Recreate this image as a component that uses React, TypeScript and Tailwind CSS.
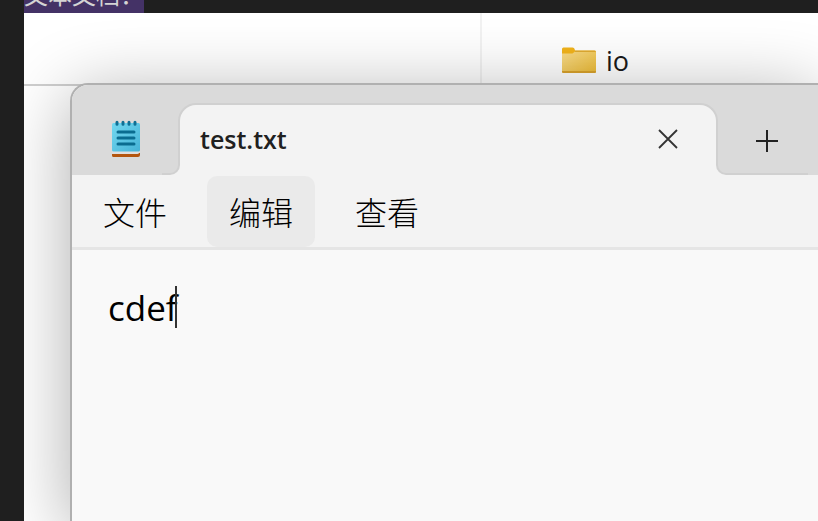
import React, { useState } from 'react';

const MENU_ITEMS = [
  { id: 'file', label: '文件', active: false },
  { id: 'edit', label: '编辑', active: true },
  { id: 'view', label: '查看', active: false },
];

const FolderIcon: React.FC = () => (
  <svg width="34" height="28" viewBox="0 0 34 28" aria-hidden="true">
    <defs>
      <linearGradient id="folder-front" x1="0" y1="0" x2="1" y2="1">
        <stop offset="0" stopColor="#f9dc8c" />
        <stop offset="1" stopColor="#ecbb35" />
      </linearGradient>
    </defs>
    <path d="M0 2Q0 .5 1.5 .5H10.5Q12.5 .5 13 3.5H32.5Q34 3.5 34 5V12H0Z" fill="#f2b31a" />
    <path d="M0 6.5H10.5L13 4.5H32.5Q34 4.5 34 6V24.5Q34 26 32.5 26H1.5Q0 26 0 24.5Z" fill="url(#folder-front)" />
    <path d="M0 24H34V24.5Q34 26 32.5 26H1.5Q0 26 0 24.5Z" fill="#d9a32c" />
    <path d="M13 4.3H33.5" stroke="#dda72f" strokeWidth="1.2" />
  </svg>
);

const NotepadIcon: React.FC = () => (
  <svg width="28" height="38" viewBox="0 0 28 38" aria-hidden="true">
    <defs>
      <linearGradient id="note-page" x1="0" y1="0" x2="1" y2="1">
        <stop offset="0" stopColor="#73d8f0" />
        <stop offset="1" stopColor="#45b2d6" />
      </linearGradient>
    </defs>
    <path d="M0 34H25L28 32.5V35Q28 37 26 37H1.5Q0 37 0 35.5Z" fill="#b4560f" />
    <path d="M0 31H28V32.5L26 33.8H0Z" fill="#e0e0e0" />
    <rect x="0" y="3" width="28" height="28.5" rx="1.5" fill="url(#note-page)" />
    <path d="M5 2.2V4.2M11 2.2V4.2M17 2.2V4.2M23 2.2V4.2" stroke="#0f6f94" strokeWidth="3" strokeLinecap="round" />
    <path d="M6 12H22M6 18H22M6 24H22" stroke="#0a6c90" strokeWidth="3" strokeLinecap="round" />
  </svg>
);

const TitleBar: React.FC = () => (
  <div className="flex items-end h-[90px] shrink-0 bg-[#dadada]">
    <div className="w-[106px] shrink-0 pl-10 pb-[17px]">
      <NotepadIcon />
    </div>

    <div className="relative flex items-center justify-between w-[540px] h-[72px] shrink-0 pb-0.5 pl-5 pr-[38px] rounded-t-[18px] border-2 border-b-0 border-[#d0d0d0] bg-[#f3f3f3]">
      <span className="text-[25px] leading-8 font-semibold text-[#202020]">test.txt</span>
      <button type="button" aria-label="关闭" className="text-[#333]">
        <svg width="20" height="20" viewBox="0 0 20 20" aria-hidden="true">
          <path d="M1 1L19 19M19 1L1 19" stroke="currentColor" strokeWidth="1.8" />
        </svg>
      </button>

      {/* Feet of the tab, curving out into the bar */}
      <div className="absolute right-full bottom-0 w-[18px] h-3 bg-[#f3f3f3]">
        <div className="h-full rounded-br-[10px] border-r-2 border-b-2 border-[#d0d0d0] bg-[#dadada]"></div>
      </div>
      <div className="absolute left-full bottom-0 w-[92px] h-3 bg-[#f3f3f3]">
        <div className="h-full rounded-bl-[10px] border-l-2 border-b-2 border-[#d0d0d0] bg-[#dadada]"></div>
      </div>
    </div>

    <button type="button" aria-label="新建标签页" className="relative shrink-0 ml-[37px] pb-[22px] text-[#222]">
      <svg width="24" height="24" viewBox="0 0 24 24" aria-hidden="true">
        <path d="M12 1V23M1 12H23" stroke="currentColor" strokeWidth="2" />
      </svg>
    </button>
  </div>
);

const MenuBar: React.FC = () => (
  <nav className="flex gap-[18px] shrink-0 pl-[9px] pt-px border-b-[3px] border-[#e5e5e5] bg-[#f3f3f3]">
    {MENU_ITEMS.map((item) => (
      <button
        key={item.id}
        type="button"
        className={`px-[22px] pt-0.5 h-[71px] rounded-[10px] text-[32px] leading-10 font-light text-black ${item.active ? 'bg-[#eaeaea]' : ''}`}
      >
        {item.label}
      </button>
    ))}
  </nav>
);

const Notepad: React.FC = () => {
  const [text, setText] = useState('cdef');

  return (
    <section className="relative flex flex-col flex-1 ml-[46px] -mt-[3px] overflow-hidden rounded-tl-[18px] border-l-2 border-t-2 border-[#b0b0b0] bg-[#f9f9f9] shadow-[0_12px_72px_rgba(0,0,0,0.33)]">
      <TitleBar />
      <MenuBar />
      <div className="relative flex flex-1 px-9 pt-9">
        <textarea
          aria-label="文本编辑器"
          value={text}
          onChange={(e) => setText(e.target.value)}
          className="flex-1 resize-none outline-none bg-transparent text-[35px] leading-[44px] text-black"
        />
        {/* Text cursor */}
        <div className="absolute left-[103px] top-9 w-0.5 h-[42px] bg-[#333]"></div>
      </div>
    </section>
  );
};

export default function App() {
  return (
    <div className="flex flex-col min-h-screen pl-6 overflow-hidden bg-[#1f1f1f] font-['Open_Sans','Noto_Sans_CJK_SC',sans-serif]">
      <div className="flex items-end h-[13px] shrink-0 overflow-hidden">
        <span className="bg-[#443266] text-[24px] leading-9 text-[#d4d4d4] whitespace-nowrap">文本文档：</span>
      </div>

      <main className="flex flex-col flex-1 overflow-hidden bg-white">
        <div className="flex h-[73px] shrink-0 border-b-2 border-[#cfcfcf]">
          <div className="w-[458px] shrink-0 border-r-2 border-[#f2f2f2]"></div>
          <div className="flex items-center gap-[10px] pl-20 pt-6">
            <FolderIcon />
            <span className="text-[27px] leading-8 text-[#1a1a1a]">io</span>
          </div>
        </div>
        <Notepad />
      </main>
    </div>
  );
}
